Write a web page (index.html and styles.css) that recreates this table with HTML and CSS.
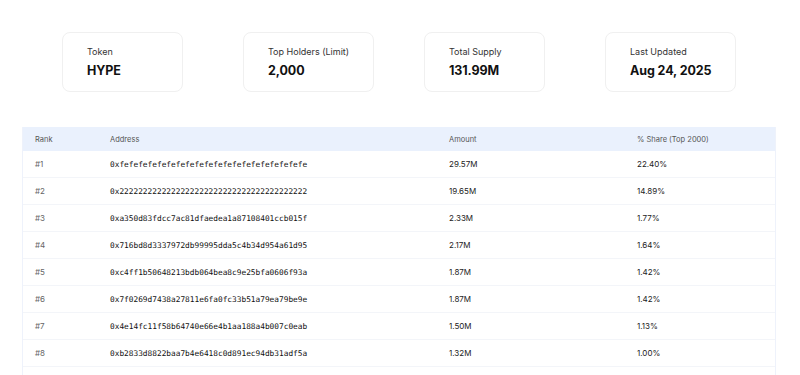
FILE: index.html
```html
<!DOCTYPE html>
<html lang="en">
<head>
    <meta charset="UTF-8">
    <meta name="viewport" content="width=device-width, initial-scale=1.0">
    <title>HYPE Top Holders</title>
    <link rel="stylesheet" href="styles.css">
</head>
<body>
    <div class="stats">
        <div class="stat-card">
            <div class="stat-label">Token</div>
            <div class="stat-value">HYPE</div>
        </div>
        <div class="stat-card">
            <div class="stat-label">Top Holders (Limit)</div>
            <div class="stat-value">2,000</div>
        </div>
        <div class="stat-card">
            <div class="stat-label">Total Supply</div>
            <div class="stat-value">131.99M</div>
        </div>
        <div class="stat-card">
            <div class="stat-label">Last Updated</div>
            <div class="stat-value">Aug 24, 2025</div>
        </div>
    </div>

    <div class="table-wrap">
        <table class="holders">
            <thead>
                <tr>
                    <th class="col-rank">Rank</th>
                    <th class="col-address">Address</th>
                    <th class="col-amount">Amount</th>
                    <th class="col-share">% Share (Top 2000)</th>
                </tr>
            </thead>
            <tbody>
                <tr><td class="rank">#1</td><td class="address">0xfefefefefefefefefefefefefefefefefefefefe</td><td>29.57M</td><td>22.40%</td></tr>
                <tr><td class="rank">#2</td><td class="address">0x2222222222222222222222222222222222222222</td><td>19.65M</td><td>14.89%</td></tr>
                <tr><td class="rank">#3</td><td class="address">0xa350d83fdcc7ac81dfaedea1a87108401ccb015f</td><td>2.33M</td><td>1.77%</td></tr>
                <tr><td class="rank">#4</td><td class="address">0x716bd8d3337972db99995dda5c4b34d954a61d95</td><td>2.17M</td><td>1.64%</td></tr>
                <tr><td class="rank">#5</td><td class="address">0xc4ff1b50648213bdb064bea8c9e25bfa0606f93a</td><td>1.87M</td><td>1.42%</td></tr>
                <tr><td class="rank">#6</td><td class="address">0x7f0269d7438a27811e6fa0fc33b51a79ea79be9e</td><td>1.87M</td><td>1.42%</td></tr>
                <tr><td class="rank">#7</td><td class="address">0x4e14fc11f58b64740e66e4b1aa188a4b007c0eab</td><td>1.50M</td><td>1.13%</td></tr>
                <tr><td class="rank">#8</td><td class="address">0xb2833d8822baa7b4e6418c0d891ec94db31adf5a</td><td>1.32M</td><td>1.00%</td></tr>
            </tbody>
        </table>
    </div>
</body>
</html>
```

FILE: styles.css
```css
body {
    font-family: Inter, 'Noto Sans', sans-serif;
    background: #ffffff;
    color: #1a1a1a;
    margin: 0;
    padding: 0;
}

.stats {
    display: grid;
    grid-template-columns: repeat(4, 1fr);
    column-gap: 48px;
    justify-items: start;
    padding: 32px 62px 0 62px;
}

.stat-card {
    box-sizing: border-box;
    min-width: 121px;
    height: 60px;
    padding: 12px 24px 0 24px;
    border: 1px solid #f0f0f0;
    border-radius: 8px;
    background: #ffffff;
    white-space: nowrap;
}

.stat-label {
    font-size: 9px;
    line-height: 14px;
    color: #333333;
}

.stat-value {
    margin-top: 3px;
    font-size: 12.5px;
    line-height: 18px;
    font-weight: 700;
    color: #111111;
    letter-spacing: -0.1px;
}

.table-wrap {
    margin: 35px 24px 0 22px;
    padding-bottom: 24px;
    border: 1px solid #eef2fb;
    border-top: none;
}

.holders {
    width: 100%;
    border-collapse: collapse;
    table-layout: fixed;
}

.holders th {
    background: #eaf1fd;
    height: 24px;
    padding: 0 12px;
    text-align: left;
    font-size: 7.5px;
    font-weight: 400;
    color: #555555;
}

.col-rank { width: 51px; }
.col-address { width: 315px; }
.col-amount { width: 164px; }

.holders td {
    height: 26px;
    padding: 0 12px;
    font-size: 8px;
    color: #222222;
    border-bottom: 1px solid #f3f5f9;
    white-space: nowrap;
}

.holders td.rank {
    color: #666666;
}

.holders td.address {
    font-family: 'DejaVu Sans Mono', 'Liberation Mono', monospace;
    font-size: 7.8px;
    color: #111111;
}
```
